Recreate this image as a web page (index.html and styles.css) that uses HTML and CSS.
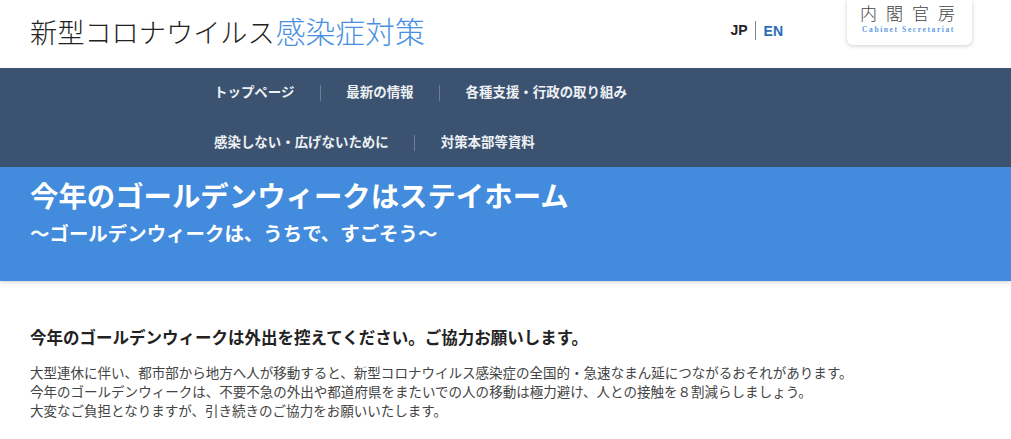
FILE: index.html
```html
<!DOCTYPE html>
<html lang="ja">
<head>
  <meta charset="utf-8">
  <title>新型コロナウイルス感染症対策</title>
  <link rel="stylesheet" href="styles.css">
</head>
<body>
  <header class="header">
    <div class="site-title">新型コロナウイルス<span class="site-title-em">感染症対策</span></div>
    <div class="header-right">
      <div class="lang">
        <a class="lang-jp">JP</a>
        <a class="lang-en">EN</a>
      </div>
      <div class="logo">
        <div class="logo-ja">内閣官房</div>
        <div class="logo-en">Cabinet Secretariat</div>
      </div>
    </div>
  </header>

  <nav class="nav">
    <ul class="nav-row">
      <li>トップページ</li>
      <li>最新の情報</li>
      <li>各種支援・行政の取り組み</li>
    </ul>
    <ul class="nav-row">
      <li>感染しない・広げないために</li>
      <li>対策本部等資料</li>
    </ul>
  </nav>

  <section class="hero">
    <h1>今年のゴールデンウィークはステイホーム</h1>
    <p>〜ゴールデンウィークは、うちで、すごそう〜</p>
  </section>

  <main class="content">
    <h2>今年のゴールデンウィークは外出を控えてください。ご協力お願いします。</h2>
    <p>大型連休に伴い、都市部から地方へ人が移動すると、新型コロナウイルス感染症の全国的・急速なまん延につながるおそれがあります。<br>
    今年のゴールデンウィークは、不要不急の外出や都道府県をまたいでの人の移動は極力避け、人との接触を８割減らしましょう。<br>
    大変なご負担となりますが、引き続きのご協力をお願いいたします。</p>
  </main>
</body>
</html>
```

FILE: styles.css
```css
*{
  box-sizing: border-box;
}
html,body{
  height: 439px;
  overflow: hidden;
}
body{
  margin: 0;
  background-color: white;
  color: #222;
  font-family: "Liberation Sans", "Noto Sans CJK JP", sans-serif;
}
.header{
  display: flex;
  justify-content: space-between;
  height: 68px;
  padding: 0 39px 0 30px;
}
.site-title{
  padding-top: 14px;
  font-size: 27.2px;
  line-height: 38px;
  font-weight: 300;
  color: #222;
}
.site-title-em{
  margin-left: 1px;
  font-size: 29.8px;
  color: #4a90e2;
}
.header-right{
  display: flex;
  align-items: flex-start;
}
.lang{
  display: flex;
  align-items: center;
  margin: 21px 64px 0 0;
  font-size: 14px;
  font-weight: bold;
}
.lang-jp{
  padding-right: 7px;
  border-right: 1px solid #888;
  line-height: 19px;
  color: #222;
}
.lang-en{
  padding-left: 8px;
  color: #2a6ebb;
}
.logo{
  width: 125px;
  height: 45px;
  padding-top: 4px;
  background-color: white;
  border-radius: 0 0 6px 6px;
  box-shadow: 0 1px 4px rgba(0,0,0,0.2);
  text-align: center;
}
.logo-ja{
  font-size: 17px;
  line-height: 21px;
  letter-spacing: 9px;
  margin-right: -5px;
  color: #444;
  font-weight: 300;
}
.logo-en{
  font-family: "Liberation Serif", serif;
  font-size: 7.5px;
  line-height: 10px;
  letter-spacing: 1.6px;
  margin-right: 2px;
  font-weight: bold;
  color: #5f9ce8;
}
.nav{
  height: 99px;
  padding-left: 214px;
  background-color: #3b5370;
}
.nav-row{
  display: flex;
  height: 50px;
  margin: 0;
  padding: 0;
  list-style: none;
  align-items: center;
}
.nav-row li{
  padding-right: 25.5px;
  margin-right: 25.5px;
  border-right: 1px solid #6c7f95;
  font-size: 13.45px;
  line-height: 16px;
  font-weight: bold;
  color: #eef1f4;
}
.nav-row li:last-child{
  border-right: none;
}
.hero{
  height: 114px;
  padding: 11px 30px 0;
  background-color: #428bdd;
  box-shadow: 0 1px 4px rgba(0,0,0,0.2);
  color: white;
}
.hero h1{
  margin: 0;
  font-size: 28.4px;
  line-height: 38px;
  font-weight: 700;
}
.hero p{
  margin: 2px 0 0;
  font-size: 19.45px;
  line-height: 32px;
  font-weight: 700;
}
.content{
  padding: 44px 30px 0;
}
.content h2{
  margin: 0;
  font-size: 16.5px;
  line-height: 26px;
  font-weight: 700;
  color: #222;
}
.content p{
  margin: 13px 0 0;
  font-size: 13.53px;
  line-height: 19px;
  color: #444;
}
```
